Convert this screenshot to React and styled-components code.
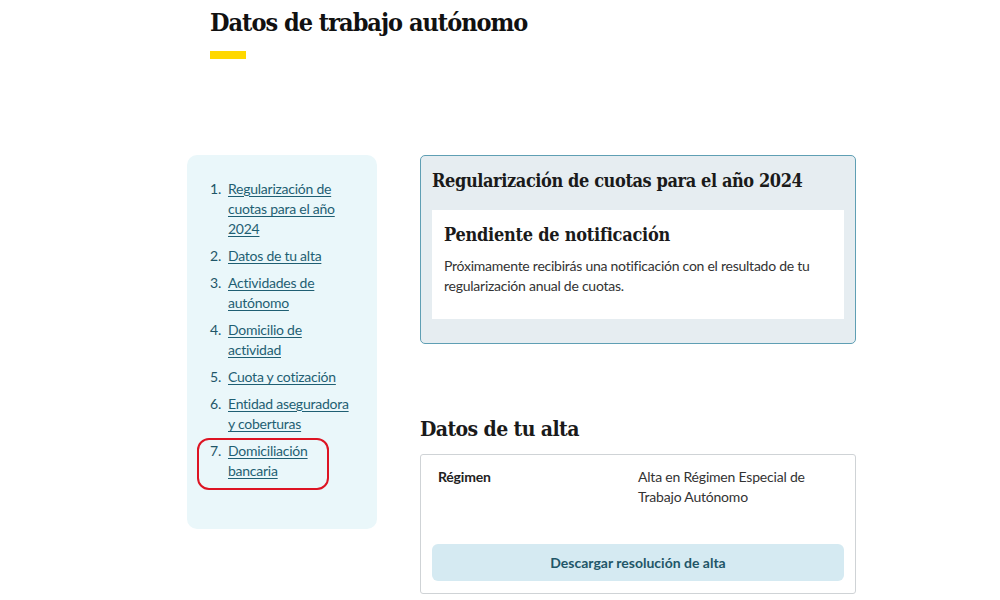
import React from "react";
import styled, { createGlobalStyle } from "styled-components";

const GlobalStyle = createGlobalStyle`
  html, body {
    margin: 0;
    padding: 0;
    background: #ffffff;
  }
  body {
    font-family: Lato, "Liberation Sans", sans-serif;
    color: #222;
  }
`;

const serif = `"DejaVu Serif Condensed", "DejaVu Serif", "Liberation Serif", serif`;

const Page = styled.div`
  width: 1000px;
  height: 600px;
  overflow: hidden;
  padding-left: 187px;
  box-sizing: border-box;
`;

const Header = styled.header`
  padding: 6px 0 0 23px;
  height: 155px;
  box-sizing: border-box;
`;

const Title = styled.h1`
  margin: 0;
  font-family: ${serif};
  font-stretch: condensed;
  font-size: 25px;
  font-weight: 700;
  line-height: 34px;
  letter-spacing: -1px;
  color: #111;
`;

const Accent = styled.div`
  width: 36px;
  height: 8px;
  background: #ffd800;
  margin-top: 11px;
`;

const Main = styled.div`
  display: flex;
  gap: 43px;
  align-items: flex-start;
`;

const Sidebar = styled.nav`
  width: 190px;
  height: 374px;
  box-sizing: border-box;
  background: #eaf7fa;
  border-radius: 10px;
  padding: 24px 20px 0 23px;
`;

const List = styled.ol`
  margin: 0;
  padding: 0;
  list-style: none;
  display: flex;
  flex-direction: column;
  gap: 7px;
`;

const Item = styled.li`
  position: relative;
  display: flex;
  font-size: 14px;
  line-height: 20px;
  letter-spacing: -0.25px;
  color: #1f5668;
`;

const Num = styled.span`
  width: 18px;
  flex-shrink: 0;
`;

const NavLink = styled.a`
  color: #1f5f73;
  text-decoration: underline;
  text-underline-offset: 2px;
  cursor: pointer;
`;

const Highlight = styled.span`
  position: absolute;
  left: -13px;
  top: -3px;
  width: 132px;
  height: 52px;
  box-sizing: border-box;
  border: 2px solid #dd1423;
  border-radius: 12px;
  pointer-events: none;
`;

const Content = styled.div`
  width: 436px;
  display: flex;
  flex-direction: column;
`;

const StatusCard = styled.section`
  background: #e6edf1;
  border: 1px solid #5f9fb4;
  border-radius: 5px;
  padding: 12px 11px 24px 11px;
`;

const CardTitle = styled.h2`
  margin: 0 0 16px 0;
  font-family: ${serif};
  font-stretch: condensed;
  font-size: 18px;
  font-weight: 700;
  line-height: 26px;
  letter-spacing: -0.4px;
  color: #1a1a1a;
  white-space: nowrap;
`;

const Notice = styled.div`
  background: #ffffff;
  padding: 12px 12px 23px 12px;
`;

const NoticeTitle = styled.h3`
  margin: 0 0 8px 0;
  font-family: ${serif};
  font-stretch: condensed;
  font-size: 18px;
  font-weight: 700;
  line-height: 26px;
  letter-spacing: -0.25px;
  color: #1a1a1a;
`;

const Text = styled.p`
  margin: 0;
  font-size: 14px;
  line-height: 20px;
  letter-spacing: -0.25px;
  color: #333;
`;

const SectionTitle = styled.h2`
  margin: 70px 0 10px 0;
  font-family: ${serif};
  font-stretch: condensed;
  font-size: 21px;
  font-weight: 700;
  line-height: 30px;
  letter-spacing: -0.6px;
  color: #1a1a1a;
`;

const DataCard = styled.section`
  border: 1px solid #cfd3d6;
  border-radius: 3px;
  background: #fff;
  padding: 12px 11px 12px 11px;
`;

const Row = styled.div`
  display: grid;
  grid-template-columns: 200px 1fr;
  padding: 0 6px;
  font-size: 14px;
  line-height: 20px;
  letter-spacing: -0.2px;
  min-height: 77px;
`;

const Label = styled.span`
  font-weight: 700;
  color: #222;
`;

const Value = styled.span`
  color: #333;
`;

const Button = styled.button`
  width: 100%;
  height: 37px;
  border: none;
  border-radius: 6px;
  background: #d5eaf2;
  color: #1f5668;
  font-family: Lato, "Liberation Sans", sans-serif;
  font-size: 14px;
  font-weight: 700;
  cursor: pointer;
`;

const navItems = [
  "Regularización de cuotas para el año 2024",
  "Datos de tu alta",
  "Actividades de autónomo",
  "Domicilio de actividad",
  "Cuota y cotización",
  "Entidad aseguradora y coberturas",
  "Domiciliación bancaria",
];

export default function App() {
  return (
    <>
      <GlobalStyle />
      <Page>
        <Header>
          <Title>Datos de trabajo autónomo</Title>
          <Accent />
        </Header>
        <Main>
          <Sidebar>
            <List>
              {navItems.map((label, i) => (
                <Item key={label}>
                  {i === navItems.length - 1 && <Highlight />}
                  <Num>{i + 1}.</Num>
                  <NavLink>{label}</NavLink>
                </Item>
              ))}
            </List>
          </Sidebar>
          <Content>
            <StatusCard>
              <CardTitle>Regularización de cuotas para el año 2024</CardTitle>
              <Notice>
                <NoticeTitle>Pendiente de notificación</NoticeTitle>
                <Text>
                  Próximamente recibirás una notificación con el resultado de tu
                  regularización anual de cuotas.
                </Text>
              </Notice>
            </StatusCard>
            <SectionTitle>Datos de tu alta</SectionTitle>
            <DataCard>
              <Row>
                <Label>Régimen</Label>
                <Value>Alta en Régimen Especial de Trabajo Autónomo</Value>
              </Row>
              <Button>Descargar resolución de alta</Button>
            </DataCard>
          </Content>
        </Main>
      </Page>
    </>
  );
}
